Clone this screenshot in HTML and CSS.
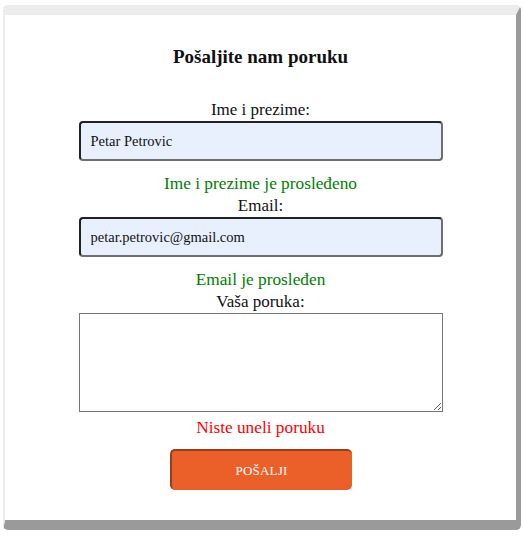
FILE: index.html
```html
<!DOCTYPE html>
<html lang="sr">
<head>
<meta charset="utf-8">
<title>Kontakt</title>
<link rel="stylesheet" href="styles.css">
</head>
<body>
<form class="card">
  <h2 class="title">Pošaljite nam poruku</h2>
  <label class="label" for="ime">Ime i prezime:</label>
  <input class="field" id="ime" type="text" value="Petar Petrovic">
  <div class="msg ok">Ime i prezime je prosleđeno</div>
  <label class="label" for="email">Email:</label>
  <input class="field" id="email" type="text" value="petar.petrovic@gmail.com">
  <div class="msg ok">Email je prosleđen</div>
  <label class="label" for="poruka">Vaša poruka:</label>
  <textarea class="area" id="poruka"></textarea>
  <div class="msg err">Niste uneli poruku</div>
  <button class="send" type="button">POŠALJI</button>
</form>
</body>
</html>
```
FILE: styles.css
```css
html, body {
  background: #fff;
}
body {
  margin: 5px 2px 0 3px;
  font-family: "Liberation Serif", serif;
  color: #111;
}
.card {
  box-sizing: border-box;
  width: 518px;
  display: flex;
  flex-direction: column;
  align-items: center;
  background: #fff;
  border-style: solid;
  border-width: 10px 5px 10px 2px;
  border-color: #ececec #9a9a9a #9a9a9a #ececec;
  border-radius: 5px;
  padding: 30px 0 30px;
}
.title {
  margin: 0 0 30px;
  font-size: 19px;
  line-height: 24px;
  font-weight: bold;
  color: #111;
}
.label {
  font-size: 17px;
  line-height: 22px;
  margin-top: 0;
}
.field {
  box-sizing: border-box;
  width: 364px;
  height: 40px;
  margin: 0;
  padding: 0 10px;
  border: 2px solid;
  border-color: #222 #6e6e6e #6e6e6e #222;
  border-radius: 4px;
  background: #e8f0fe;
  font-family: "Liberation Serif", serif;
  font-size: 14.5px;
  color: #111;
  outline: none;
}
.msg {
  font-size: 17.3px;
  line-height: 22px;
  margin-top: 12px;
}
.ok {
  color: #008000;
}
.err {
  color: #f00;
  margin-top: 5px;
}
.area {
  box-sizing: border-box;
  display: block;
  width: 364px;
  height: 99px;
  margin: 0;
  border: 1px solid #767676;
  border-radius: 0;
  background: #fff;
}
.send {
  box-sizing: border-box;
  width: 182px;
  height: 41px;
  margin-top: 10px;
  background: #eb5f28;
  border-style: solid;
  border-width: 2px 0 0 2px;
  border-color: #9b3d18;
  border-radius: 5px;
  color: #fff;
  font-family: "Liberation Serif", serif;
  font-size: 13px;
  letter-spacing: 0.2px;
}
```
